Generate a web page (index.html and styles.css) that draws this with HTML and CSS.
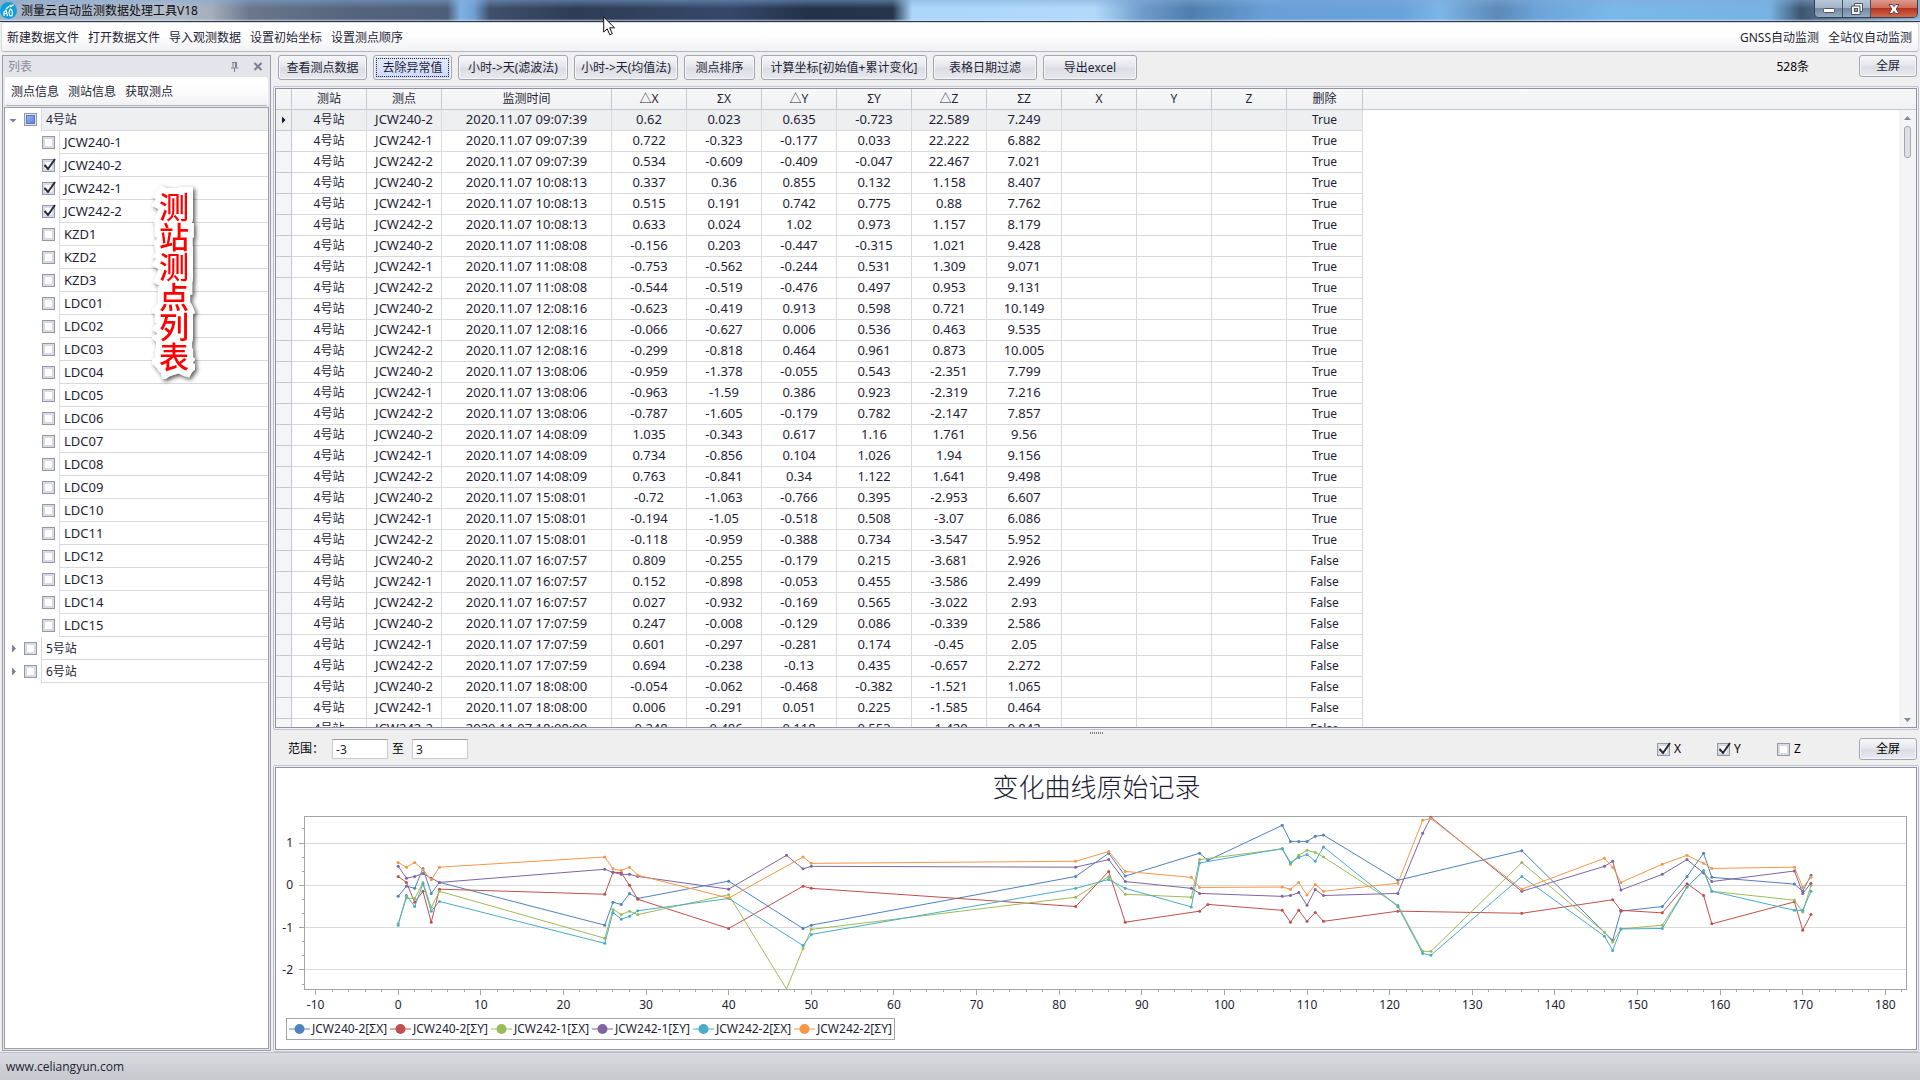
FILE: index.html
```html
<!DOCTYPE html>
<html lang="zh-CN">
<head>
<meta charset="utf-8">
<title>测量云自动监测数据处理工具V18</title>
<link rel="stylesheet" href="styles.css">
</head>
<body>
<div class="app">
  <header class="titlebar">
    <svg class="logo" viewBox="0 0 17 17" width="17" height="17" aria-hidden="true">
      <circle cx="8.500" cy="8.500" r="8.500" fill="#0d9fe0"/>
      <path d="M4 14V10L6 8L7.500 14M4 11.500H6.500M10.500 7C8.500 8.500 8.800 14 10.800 14C13 14 13 8.500 10.500 7ZM6 7L9 4.500M11 4.500L13.500 2.500" fill="none" stroke="#fff" stroke-width="1.200"/>
      <circle cx="10.500" cy="4" r="1.300" fill="#f6e27a"/>
    </svg>
    <span class="title-text">测量云自动监测数据处理工具V18</span>
    <div class="window-buttons">
      <button class="win-btn win-min" aria-label="最小化"><svg width="14" height="14" viewBox="0 0 14 14"><rect x="1.500" y="6.500" width="11" height="4" rx="1" fill="#fff" stroke="#4c5560"/></svg></button>
      <button class="win-btn win-max" aria-label="还原"><svg width="14" height="14" viewBox="0 0 14 14"><path d="M4.500 1.500H12.500V9.500H10V12.500H1.500V4H4.500Z" fill="#f4f4f4" stroke="#4c5560"/><path d="M4.500 4H10V9.500" fill="none" stroke="#4c5560"/><rect x="4.500" y="6.500" width="3" height="3" fill="#8ba0b8" stroke="#4c5560"/></svg></button>
      <button class="win-btn win-close" aria-label="关闭"><svg width="14" height="12" viewBox="0 0 14 12"><path d="M2 1.500H5.500L7 3.800L8.500 1.500H12L9.200 6L12 10.500H8.500L7 8.200L5.500 10.500H2L4.800 6Z" fill="#fff" stroke="#5b4a50"/></svg></button>
    </div>
  </header>

  <nav class="menubar">
    <a href="#">新建数据文件</a>
    <a href="#">打开数据文件</a>
    <a href="#">导入观测数据</a>
    <a href="#">设置初始坐标</a>
    <a href="#">设置测点顺序</a>
    <span class="spacer"></span>
    <a href="#">GNSS自动监测</a>
    <a href="#">全站仪自动监测</a>
  </nav>

  <main class="workspace">
    <aside class="side">
      <div class="side-caption">
        <h2>列表</h2>
        <svg width="9" height="10" viewBox="0 0 9 10" aria-hidden="true"><path d="M2 .5H7M3 .5V5.500M5.500 .5V5.500M6.500 .5V5.500M1 6H8.500M4.500 6V10" fill="none" stroke="#7d7f90"/></svg>
        <svg width="10" height="9" viewBox="0 0 10 9" aria-hidden="true"><path d="M1.500 1L8.500 8M8.500 1L1.500 8" fill="none" stroke="#7d7f90" stroke-width="2"/></svg>
      </div>
      <nav class="side-tools">
        <a href="#">测点信息</a>
        <a href="#">测站信息</a>
        <a href="#">获取测点</a>
      </nav>
      <ul class="tree" id="tree"></ul>
      <p class="callout">测站测点列表</p>
    </aside>

    <section class="content">
      <div class="toolbar">
        <button class="btn w89">查看测点数据</button>
        <button class="btn w79 focused">去除异常值</button>
        <button class="btn w110">小时-&gt;天(滤波法)</button>
        <button class="btn w104">小时-&gt;天(均值法)</button>
        <button class="btn w71">测点排序</button>
        <button class="btn w166">计算坐标[初始值+累计变化]</button>
        <button class="btn w104">表格日期过滤</button>
        <button class="btn w94">导出excel</button>
        <span class="spacer"></span>
        <span class="count">528条</span>
        <button class="btn full">全屏</button>
      </div>

      <div class="frame grid-frame">
        <div class="grid-pane">
          <div class="grid-scroll">
            <table class="grid">
              <colgroup><col class="c-ind"><col class="c-std"><col class="c-std"><col class="c-time"><col class="c-std" span="9"><col class="c-del"></colgroup>
              <thead><tr><th></th><th>测站</th><th>测点</th><th>监测时间</th><th>△X</th><th>ΣX</th><th>△Y</th><th>ΣY</th><th>△Z</th><th>ΣZ</th><th>X</th><th>Y</th><th>Z</th><th>删除</th></tr></thead>
              <tbody id="rows"></tbody>
            </table>
          </div>
          <div class="scrollbar">
            <span class="arrow up"></span>
            <span class="thumb"></span>
            <span class="arrow down"></span>
          </div>
        </div>
      </div>

      <div class="rangebar">
        <span class="grip"></span>
        <label for="lo">范围：</label>
        <input class="num" id="lo" type="text" value="-3">
        <label class="to" for="hi">至</label>
        <input class="num" id="hi" type="text" value="3">
        <span class="spacer"></span>
        <label class="axis"><input class="check" type="checkbox" checked>X</label>
        <label class="axis"><input class="check" type="checkbox" checked>Y</label>
        <label class="axis"><input class="check" type="checkbox">Z</label>
        <button class="btn full">全屏</button>
      </div>

      <div class="frame chart-frame">
        <div class="chart">
          <h1>变化曲线原始记录</h1>
          <div class="plot" id="plot"></div>
          <ul class="legend" id="legend"></ul>
        </div>
      </div>
    </section>
  </main>

  <footer class="status">www.celiangyun.com</footer>
</div>
<svg class="pointer" width="13" height="20" viewBox="0 0 13 20" aria-hidden="true"><path d="M.7 1V16L4.200 12.800L6.800 18.800L9.300 17.700L6.700 11.800H11.500Z" fill="#fff" stroke="#111"/></svg>
<script src="app.js"></script>
</body>
</html>
```
FILE: styles.css
```css
* { box-sizing: border-box; }

body {
  margin: 0;
  font: 12px/16px "Noto Sans", "Noto Sans CJK SC", sans-serif;
  color: #1e1e36;
  background: #efeff0;
}

a { color: inherit; text-decoration: none; }
button, input { font: inherit; color: inherit; }
h1, h2, p, ul { margin: 0; padding: 0; font-weight: 400; }
ul { list-style: none; }
.spacer { flex: 1; }

.app { display: flex; flex-direction: column; height: 100vh; overflow: hidden; }

/* title bar */
.titlebar {
  display: flex;
  align-items: center;
  flex: none;
  height: 22px;
  gap: 4px;
  border-bottom: 1px solid #2c3a4c;
  background:
    linear-gradient(to bottom, transparent 90%, rgba(220, 235, 250, .7)),
    linear-gradient(to bottom, rgba(130, 170, 215, .5), transparent 40%),
    linear-gradient(to right, #a3b2c4 0, #b4bcc8 9%, #a4aebc 11%, #6a778b 13%, #56657d 18%, #4d5e79 23.300%, #7fb2e6 24%, #6f9fd2 24.700%, #40506a 25.500%, #2e3c55 30%, #35486a 38%, #243249 42%, #26344c 46.500%, #abd6fa 47.500%, #b2dafb 57%, #6d9ccb 59.500%, #4f7fae 62%, #689fd8 66%, #6aa2dc 73%, #7cb6e8 75%, #5b89b8 78%, #6ba3d8 80%, #7bb8ea 84%, #76b2e4 92.200%, #3d5470 93.800%, #4d6482 94.500%, #8fb0d2 100%);
}
.title-text { line-height: 16px; color: #0c0c14; }
.window-buttons {
  display: flex;
  align-self: flex-start;
  height: 18px;
  margin: 0 2px 0 auto;
  border: 1px solid #34404e;
  border-top: 0;
  border-radius: 0 0 5px 5px;
  overflow: hidden;
}
.win-btn {
  display: flex;
  align-items: center;
  justify-content: center;
  width: 28px;
  padding: 0;
  border: 0;
  border-right: 1px solid #46525f;
  background: linear-gradient(#b9c9da 0, #a2b4c8 45%, #75899f 50%, #93abc4 100%);
}
.win-close { width: 46px; border-right: 0; background: linear-gradient(#dd9a8c 0, #cf6f5c 45%, #b43420 50%, #d2694c 100%); }

/* menu bar */
.menubar {
  display: flex;
  align-items: center;
  flex: none;
  gap: 9px;
  height: 30px;
  margin: 0 1px;
  padding: 2px 6px 0 5px;
  border: 1px solid #d8d9de;
  border-bottom: 1px solid #b4b6bf;
  border-radius: 3px;
  background: linear-gradient(#fff, #fdfdfe 50%, #f1f1f4);
}

/* work area */
.workspace {
  display: grid;
  grid-template-columns: 269px minmax(0, 1fr);
  flex: 1;
  gap: 2px;
  min-height: 0;
  padding: 3px 1px 0 2px;
}

/* side panel */
.side {
  position: relative;
  display: flex;
  flex-direction: column;
  min-height: 0;
  margin-bottom: 1px;
  padding: 0 1px 1px;
  border: 1px solid #9c9eab;
  background: #e4e5ea;
}
.side-caption { display: flex; align-items: center; gap: 14px; height: 21px; padding: 0 6px 0 4px; }
.side-caption h2 { flex: 1; font-size: 12px; line-height: 16px; color: #8b8d9b; }
.side-tools {
  display: flex;
  align-items: center;
  gap: 9px;
  height: 29px;
  margin: 0 1px 1px;
  padding: 0 5px;
  border: 1px solid #fff;
  border-bottom-color: #b4b6bf;
  border-radius: 3px;
  background: linear-gradient(#fff, #fcfcfd 50%, #f1f1f4);
}
.tree { flex: 1; min-height: 0; overflow: hidden; border: 1px solid #9c9eab; background: #fff; }
.node { display: flex; align-items: center; height: 23px; padding-left: 4px; }
.node.child { padding-left: 37px; }
.node.child .twisty { display: none; }
.twisty { position: relative; width: 15px; height: 12px; }
.twisty::after {
  content: "";
  display: block;
  width: 4px;
  height: 8px;
  margin: 2px 3px;
  background: #7d7f90;
  clip-path: polygon(0 0, 100% 50%, 0 100%);
}
.twisty.open::after { width: 8px; height: 4px; margin: 5px 0; clip-path: polygon(0 0, 100% 0, 50% 100%); }
.node label {
  flex: 1;
  height: 23px;
  margin-left: 4px;
  padding: 0 4px;
  line-height: 23px;
  border: 1px solid #d8d8df;
  border-width: 0 0 1px 1px;
}
.node.child label { font-size: 13px; }
.node.selected label { background: #eeeff1; }

.check {
  position: relative;
  appearance: none;
  flex: none;
  width: 13px;
  height: 13px;
  margin: 0;
  border: 1px solid #9698a8;
  background: #fff;
  box-shadow: inset 0 0 0 2px #d9dbe3;
}
.check:checked::after {
  content: "";
  position: absolute;
  left: 0;
  top: -2px;
  width: 13px;
  height: 13px;
  background: url("data:image/svg+xml,%3Csvg xmlns='http://www.w3.org/2000/svg' viewBox='0 0 13 13'%3E%3Cpath d='M1.500 7L5 11L12 1' fill='none' stroke='%2328283c' stroke-width='2'/%3E%3C/svg%3E");
}
.check.mixed { background: linear-gradient(135deg, #a9c6f7, #4a72d0); box-shadow: inset 0 0 0 1px #dfe6f5, inset 0 0 0 2px #5a78b8; }

.callout {
  position: absolute;
  left: 153px;
  top: 136px;
  writing-mode: vertical-rl;
  font-size: 30px;
  line-height: 32px;
  font-weight: 500;
  color: #f00;
  -webkit-text-stroke: 12px #fff;
  stroke-linejoin: round;
  paint-order: stroke fill;
  filter: drop-shadow(2px 2px 2px rgba(0, 0, 0, .65));
}

/* content */
.content { display: flex; flex-direction: column; min-width: 0; min-height: 0; }
.toolbar { display: flex; align-items: flex-start; flex: none; gap: 6px; height: 31px; padding: 0 2px 0 5px; }
.btn {
  flex: none;
  height: 25px;
  padding: 0;
  white-space: nowrap;
  text-align: center;
  border: 1px solid #a3a5b3;
  border-radius: 3px;
  background: linear-gradient(#f7f7f9, #e6e7ec 45%, #dcdde4 55%, #e9eaee);
  box-shadow: inset 0 0 0 1px #f6f6f9;
}
.btn.focused {
  outline: 1px dotted #20203a;
  outline-offset: -4px;
  background: linear-gradient(#e4ebfb, #ccd9f8);
}
.w71 { width: 71px; }
.w79 { width: 79px; }
.w89 { width: 89px; }
.w94 { width: 94px; }
.w104 { width: 104px; }
.w110 { width: 110px; }
.w166 { width: 166px; }
.full { width: 58px; height: 22px; }
.count { margin-right: 44px; line-height: 24px; color: #000; }

.frame { min-height: 0; padding: 1px; border: 1px solid #c2c4cd; border-radius: 2px; }
.grid-frame { flex: 1 1 644px; }
.chart-frame { flex: 1 1 287px; }
.grid-pane {
  display: flex;
  height: 100%;
  overflow: hidden;
  border: 1px solid #8f92a2;
  background: linear-gradient(#f8f8f9, #f0f1f3 20px, #c6c8d0 20px, #c6c8d0 21px, #fff 21px);
}
.grid-scroll { flex: 1; min-width: 0; overflow: hidden; }
.grid { width: 1087px; table-layout: fixed; border-collapse: separate; border-spacing: 0; }
.c-ind { width: 16px; }
.c-std { width: 75px; }
.c-time { width: 170px; }
.c-del { width: 76px; }
.grid th, .grid td {
  height: 21px;
  padding: 0;
  line-height: 18px;
  text-align: center;
  vertical-align: top;
  white-space: nowrap;
  border: 1px solid #d8d8df;
  border-width: 0 1px 1px 0;
}
.grid th { font-weight: 400; line-height: 20px; border-color: #c6c8d0; }
.grid td { font-size: 13px; background: #fff; }
.grid td.cjk, .grid td.flag { font-size: 12px; line-height: 20px; }
.grid td:first-child { background: #f4f5f7; border-color: #c6c8d0; }
.grid tr.current td { background: #eeeff1; }
.grid tr.current td:first-child::after {
  content: "";
  display: block;
  width: 4px;
  height: 8px;
  margin: 6px auto;
  background: #14142a;
  clip-path: polygon(0 0, 100% 50%, 0 100%);
}
.scrollbar {
  display: flex;
  flex-direction: column;
  align-items: center;
  width: 17px;
  margin-top: 21px;
  padding: 6px 0 5px;
  background: #f4f4f6;
}
.arrow { width: 7px; height: 4px; background: #85879a; }
.arrow.up { clip-path: polygon(50% 0, 100% 100%, 0 100%); }
.arrow.down { margin-top: auto; clip-path: polygon(0 0, 100% 0, 50% 100%); }
.thumb { width: 7px; height: 32px; margin-top: 6px; border: 1px solid #a3a5b3; border-radius: 3px; background: #dfe0e6; }

.rangebar { position: relative; display: flex; align-items: center; flex: none; height: 35px; padding: 3px 2px 0 15px; color: #000; }
.grip {
  position: absolute;
  left: 50%;
  top: 2px;
  width: 13px;
  height: 2px;
  margin-left: -6px;
  background: repeating-linear-gradient(to right, #7d7f90 0, #7d7f90 1px, transparent 1px, transparent 2px);
}
.num {
  width: 56px;
  height: 20px;
  margin-left: 8px;
  padding: 0 3px;
  border: 1px solid #c9cad2;
  border-top-color: #9c9eab;
  background: #fff;
  color: #1e1e36;
}
.to { margin-left: 4px; }
.axis { display: flex; align-items: center; gap: 4px; width: 60px; }
.rangebar .full { margin-left: 22px; }

/* chart */
.chart {
  display: flex;
  flex-direction: column;
  height: 100%;
  padding: 0 9px 9px 10px;
  border: 1px solid #8f92a2;
  background: #fff;
}
.chart h1 { height: 40px; font-size: 26px; line-height: 38px; font-weight: 300; text-align: center; }
.plot { flex: 1; min-height: 0; }
.plot svg { display: block; overflow: visible; }
.plot text { font-size: 12px; fill: #1e1e36; }
.plot .axis-line { fill: none; stroke: #a4a4a4; shape-rendering: crispEdges; }
.plot .grid-line { fill: none; stroke: #d9d9d9; shape-rendering: crispEdges; }
.plot .series { fill: none; stroke-width: 1; }
.legend {
  display: flex;
  align-self: flex-start;
  align-items: center;
  gap: 5px;
  height: 22px;
  padding: 0 4px 0 2px;
  border: 1px solid #a4a4a4;
}
.legend li { display: flex; align-items: center; gap: 2px; width: 96px; white-space: nowrap; }
.legend svg { flex: none; }

.status {
  flex: none;
  height: 28px;
  padding: 0 6px;
  font: 12px/27px "Open Sans", sans-serif;
  border-top: 1px solid #bcbdc6;
  background: linear-gradient(#dadbe0, #c6c7cd);
}

.pointer { position: absolute; left: 603px; top: 16px; }
```
FILE: app.js
```js
// Station tree
const points = ["JCW240-1", "JCW240-2", "JCW242-1", "JCW242-2", "KZD1", "KZD2", "KZD3"];
for (let i = 1; i <= 15; i++) points.push("LDC" + String(i).padStart(2, "0"));
const picked = ["JCW240-2", "JCW242-1", "JCW242-2"];

function node(id, name, cls, twisty, state) {
  return `<li class="node ${cls}"><span class="twisty ${twisty}"></span>` +
    `<input class="check ${state === "mixed" ? "mixed" : ""}" type="checkbox" id="${id}" ${state === "on" ? "checked" : ""}>` +
    `<label for="${id}">${name}</label></li>`;
}
document.getElementById("tree").innerHTML =
  node("st4", "4号站", "selected", "open", "mixed") +
  points.map((p, i) => node("pt" + i, p, "child", "", picked.includes(p) ? "on" : "")).join("") +
  node("st5", "5号站", "", "", "") +
  node("st6", "6号站", "", "", "");

// Observation table: dX SX dY SY dZ SZ, three points for each time
const times = ["09:07:39", "10:08:13", "11:08:08", "12:08:16", "13:08:06", "14:08:09", "15:08:01", "16:07:57", "17:07:59", "18:08:00"];
const values = `0.62 0.023 0.635 -0.723 22.589 7.249
0.722 -0.323 -0.177 0.033 22.222 6.882
0.534 -0.609 -0.409 -0.047 22.467 7.021
0.337 0.36 0.855 0.132 1.158 8.407
0.515 0.191 0.742 0.775 0.88 7.762
0.633 0.024 1.02 0.973 1.157 8.179
-0.156 0.203 -0.447 -0.315 1.021 9.428
-0.753 -0.562 -0.244 0.531 1.309 9.071
-0.544 -0.519 -0.476 0.497 0.953 9.131
-0.623 -0.419 0.913 0.598 0.721 10.149
-0.066 -0.627 0.006 0.536 0.463 9.535
-0.299 -0.818 0.464 0.961 0.873 10.005
-0.959 -1.378 -0.055 0.543 -2.351 7.799
-0.963 -1.59 0.386 0.923 -2.319 7.216
-0.787 -1.605 -0.179 0.782 -2.147 7.857
1.035 -0.343 0.617 1.16 1.761 9.56
0.734 -0.856 0.104 1.026 1.94 9.156
0.763 -0.841 0.34 1.122 1.641 9.498
-0.72 -1.063 -0.766 0.395 -2.953 6.607
-0.194 -1.05 -0.518 0.508 -3.07 6.086
-0.118 -0.959 -0.388 0.734 -3.547 5.952
0.809 -0.255 -0.179 0.215 -3.681 2.926
0.152 -0.898 -0.053 0.455 -3.586 2.499
0.027 -0.932 -0.169 0.565 -3.022 2.93
0.247 -0.008 -0.129 0.086 -0.339 2.586
0.601 -0.297 -0.281 0.174 -0.45 2.05
0.694 -0.238 -0.13 0.435 -0.657 2.272
-0.054 -0.062 -0.468 -0.382 -1.521 1.065
0.006 -0.291 0.051 0.225 -1.585 0.464
-0.248 -0.486 0.118 0.553 -1.429 0.842`.split("\n");
document.getElementById("rows").innerHTML = values.map((line, i) => {
  const cells = [picked[i % 3], "2020.11.07 " + times[Math.floor(i / 3)], ...line.split(" "), "", "", ""];
  return `<tr class="${i ? "" : "current"}"><td></td><td class="cjk">4号站</td>` +
    cells.map(c => `<td>${c}</td>`).join("") + `<td class="flag">${i < 21 ? "True" : "False"}</td></tr>`;
}).join("");

// Chart
const series = [
  ["JCW240-2[ΣX]", "#4f81bd", "0:-.26 1:-.02 2:-.07 3:.4 4:-.19 5:.07 25:-.94 26:-.4 27:-.45 28:-.19 29:-.31 40:.1 49:-1.02 50:-.94 82:.21 86:.76 88:.22 97:.76 98:.59 107:1.42 108:1.04 109:1.04 110:1.04 111:1.16 112:1.19 121:.12 136:.82 147:-1.3 148:-.61 153:-.5 156:.21 158:.76 159:.19 169:.03 170:-.14 171:.24"],
  ["JCW240-2[ΣY]", "#c0504d", "0:.21 1:.07 2:-.4 3:-.14 4:-.87 5:-.09 25:-.21 26:.31 27:.3 28:0 29:-.33 40:-1.02 49:-.02 50:-.07 82:-.5 86:.33 88:-.87 97:-.61 98:-.45 107:-.59 108:-.87 109:-.59 110:-.85 111:-.64 112:-.85 121:-.61 136:-.66 147:-.34 148:-.59 153:-.65 156:.04 158:-.24 159:-.91 169:-.39 170:-1.06 171:-.69"],
  ["JCW242-1[ΣX]", "#9bbb59", "0:-.9 1:-.3 2:-.31 3:.07 4:-.52 5:-.14 25:-1.25 26:-.57 27:-.69 28:-.61 29:-.69 40:-.22 47:-2.45 49:-1.49 50:-1.04 82:-.28 86:.21 88:-.21 96:-.28 97:.61 107:.86 108:.5 109:.71 110:.83 111:.78 112:.67 121:-.47 124:-1.56 125:-1.56 136:.54 146:-1.11 147:-1.34 148:-1.03 153:-.94 156:-.04 158:.34 159:-.14 169:-.35 170:-.63 171:0"],
  ["JCW242-1[ΣY]", "#8064a2", "0:.45 1:.17 2:.21 3:.28 4:.17 5:.07 25:.38 26:.31 27:.26 28:.26 29:.21 40:-.09 47:.71 49:.39 50:.45 82:.43 86:.61 88:.09 96:-.07 97:-.19 107:-.26 108:-.24 109:-.17 110:-.47 111:-.1 112:-.24 121:-.19 124:1.23 125:1.61 136:-.14 146:.45 147:.57 148:-.11 153:.26 156:.61 158:.29 159:.09 169:.34 170:-.19 171:.05"],
  ["JCW242-2[ΣX]", "#4bacc6", "0:-.94 1:-.24 2:-.5 3:.04 4:-.61 5:-.38 25:-1.37 26:-.64 27:-.8 28:-.73 29:-.6 40:-.31 49:-1.42 50:-1.16 82:-.07 86:.14 88:-.07 96:-.51 97:.53 107:.87 108:.54 109:.66 110:.73 111:.57 112:.91 121:-.5 124:-1.61 125:-1.65 136:.21 146:-1.2 147:-1.54 148:-1.03 153:-1.02 156:-.04 158:.35 159:-.14 169:-.59 170:-.59 171:-.14"],
  ["JCW242-2[ΣY]", "#f79646", "0:.54 1:.43 2:.54 3:.37 4:.13 5:.43 25:.67 26:.39 27:.35 28:.43 29:.24 40:-.3 49:.67 50:.52 82:.57 86:.8 88:.33 96:.19 97:-.05 107:-.04 108:-.09 109:.07 110:-.23 111:.02 112:-.14 121:.05 124:1.54 125:1.58 136:-.09 146:.64 147:.43 148:.07 153:.5 156:.71 158:.52 159:.4 169:.43 170:-.05 171:.19"]
];
const X_MIN = -11.4, X_MAX = 182.5, Y_MIN = -2.45, Y_MAX = 1.64;
const plot = document.getElementById("plot");

function draw() {
  plot.textContent = "";
  const w = plot.clientWidth, h = plot.clientHeight;
  const left = 18, top = 8, right = w - 1, bottom = h - 29;
  const px = v => left + (v - X_MIN) / (X_MAX - X_MIN) * (right - left);
  const py = v => bottom - (v - Y_MIN) / (Y_MAX - Y_MIN) * (bottom - top);
  let grid = "", axis = `M${left} ${top}H${right}V${bottom}H${left}Z`, text = "", lines = "";
  for (let v = -10; v <= 182; v += 2) axis += `M${px(v)} ${bottom}v${v % 10 ? 3 : 6}`;
  for (let v = -10; v <= 180; v += 10) text += `<text x="${px(v)}" y="${bottom + 20}" text-anchor="middle">${v}</text>`;
  for (let k = -7; k <= 4; k++) axis += `M${left} ${py(k / 3)}h${k % 3 ? -2 : -5}`;
  for (let v = -2; v <= 1; v++) {
    grid += `M${left} ${py(v)}H${right}`;
    text += `<text x="${left - 11}" y="${py(v) + 4}" text-anchor="end">${v}</text>`;
  }
  for (const [, color, data] of series) {
    const pts = data.split(" ").map(p => p.split(":").map(Number));
    lines += `<polyline class="series" stroke="${color}" points="${pts.map(p => px(p[0]) + "," + py(p[1])).join(" ")}"/>`;
    lines += pts.filter(p => p[1] > -2.4).map(p => `<circle cx="${px(p[0])}" cy="${py(p[1])}" r="1.500" fill="${color}"/>`).join("");
  }
  plot.innerHTML = `<svg width="${w}" height="${h}"><path class="grid-line" d="${grid}"/><path class="axis-line" d="${axis}"/>${text}${lines}</svg>`;
}
document.getElementById("legend").innerHTML = series.map(([name, color]) =>
  `<li><svg width="21" height="12"><path d="M0 6H21" stroke="${color}"/><circle cx="10.500" cy="6" r="5" fill="${color}"/></svg>${name}</li>`).join("");
draw();
window.addEventListener("resize", draw);
```
